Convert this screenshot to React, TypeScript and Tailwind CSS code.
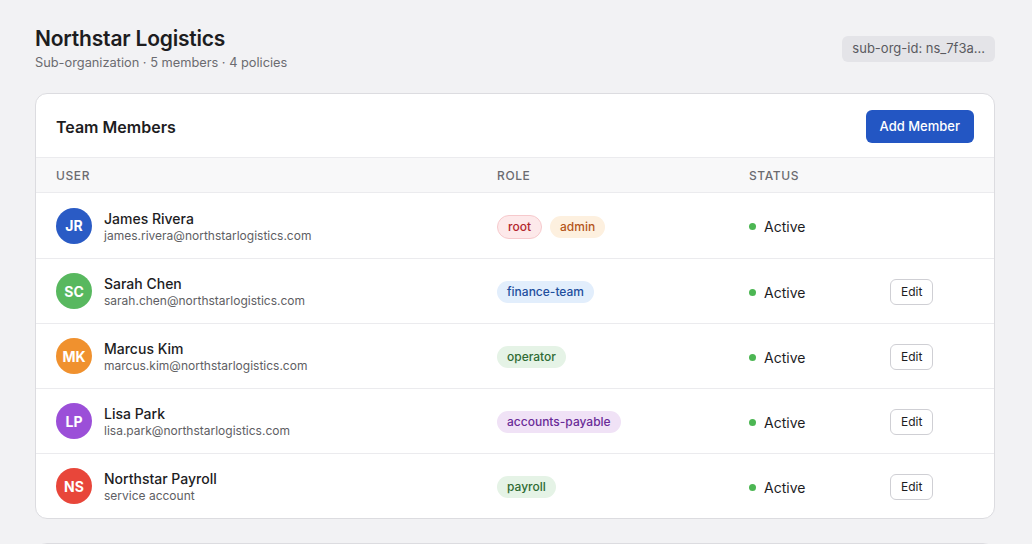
import { Fragment } from 'react';

type Member = {
  initials: string;
  name: string;
  email: string;
  avatar: string;
  roles: { label: string; cls: string }[];
  editable: boolean;
};

const members: Member[] = [
  {
    initials: 'JR',
    name: 'James Rivera',
    email: 'james.rivera@northstarlogistics.com',
    avatar: 'bg-[#2a5bc5]',
    roles: [
      { label: 'root', cls: 'bg-[#fde9ea] text-[#b3262d] border border-[#f6c9cc]' },
      { label: 'admin', cls: 'bg-[#fdf0df] text-[#b5561a]' },
    ],
    editable: false,
  },
  {
    initials: 'SC',
    name: 'Sarah Chen',
    email: 'sarah.chen@northstarlogistics.com',
    avatar: 'bg-[#58b85f]',
    roles: [{ label: 'finance-team', cls: 'bg-[#e2eefc] text-[#1f4f9e]' }],
    editable: true,
  },
  {
    initials: 'MK',
    name: 'Marcus Kim',
    email: 'marcus.kim@northstarlogistics.com',
    avatar: 'bg-[#f0912e]',
    roles: [{ label: 'operator', cls: 'bg-[#e5f3e6] text-[#2f6b34]' }],
    editable: true,
  },
  {
    initials: 'LP',
    name: 'Lisa Park',
    email: 'lisa.park@northstarlogistics.com',
    avatar: 'bg-[#9b4fd8]',
    roles: [{ label: 'accounts-payable', cls: 'bg-[#f0e2f6] text-[#6a2b98]' }],
    editable: true,
  },
  {
    initials: 'NS',
    name: 'Northstar Payroll',
    email: 'service account',
    avatar: 'bg-[#e8463a]',
    roles: [{ label: 'payroll', cls: 'bg-[#e5f3e6] text-[#2f6b34]' }],
    editable: true,
  },
];

const cols = 'grid grid-cols-[441px_252px_141px_1fr] items-center px-5';

export default function App() {
  return (
    <div
      className="min-h-screen bg-[#f2f2f4] pl-[35px] pr-[37px] pt-[26px] pb-10 text-[#1d1d1f]"
      style={{ fontFamily: 'Inter, "Liberation Sans", sans-serif' }}
    >
      <div className="flex items-start justify-between">
        <div>
          <h1 className="text-[21px] font-semibold leading-[26px] tracking-[-0.2px]">Northstar Logistics</h1>
          <p className="mt-[1px] text-[12.8px] text-[#6b6b70]">Sub-organization · 5 members · 4 policies</p>
        </div>
        <div className="mt-[10px] rounded-md bg-[#e4e4e8] px-[10px] py-[3px] text-[13px] text-[#5a5a60]">
          sub-org-id: ns_7f3a...
        </div>
      </div>

      <div className="mt-[21px] overflow-hidden rounded-xl border border-[#dcdce0] bg-white">
        <div className="flex h-[63px] items-center justify-between px-5 pt-[2px]">
          <h2 className="text-[16px] font-semibold">Team Members</h2>
          <button
            type="button"
            className="rounded-md bg-[#2356c3] px-[14px] py-[7px] text-[13px] font-medium text-white"
          >
            Add Member
          </button>
        </div>
        <div className={`${cols} h-[36px] border-y border-[#ebebee] bg-[#f8f8f9] pt-[2px] text-[12px] font-medium tracking-[0.6px] text-[#6b6b70]`}>
          <div>USER</div>
          <div>ROLE</div>
          <div>STATUS</div>
          <div />
        </div>
        {members.map((m, i) => (
          <Fragment key={m.initials}>
            <div className={`${cols} h-[65px] pt-[2px] ${i > 0 ? 'border-t border-[#ebebee]' : ''}`}>
              <div className="flex items-center gap-3">
                <div
                  className={`-mt-[2px] flex h-9 w-9 items-center justify-center rounded-full text-[14px] font-bold text-white ${m.avatar}`}
                >
                  {m.initials}
                </div>
                <div>
                  <div className="text-[14px] font-medium leading-[17px]">{m.name}</div>
                  <div className="text-[12px] leading-[17px] text-[#5e5e63]">{m.email}</div>
                </div>
              </div>
              <div className="flex items-center gap-2">
                {m.roles.map((r) => (
                  <span key={r.label} className={`rounded-full px-[10px] py-[2px] text-[12px] font-medium ${r.cls}`}>
                    {r.label}
                  </span>
                ))}
              </div>
              <div className="flex items-center gap-2 text-[14px]">
                <span className="h-[7px] w-[7px] rounded-full bg-[#4cb653]" />
                Active
              </div>
              <div className="-mt-[2px]">
                {m.editable && (
                  <button
                    type="button"
                    className="rounded-md border border-[#cfcfd4] bg-white px-[10px] py-[3px] text-[12px]"
                  >
                    Edit
                  </button>
                )}
              </div>
            </div>
          </Fragment>
        ))}
      </div>

      <div className="mt-6 h-24 rounded-xl border border-[#dcdce0] bg-white" />
    </div>
  );
}
